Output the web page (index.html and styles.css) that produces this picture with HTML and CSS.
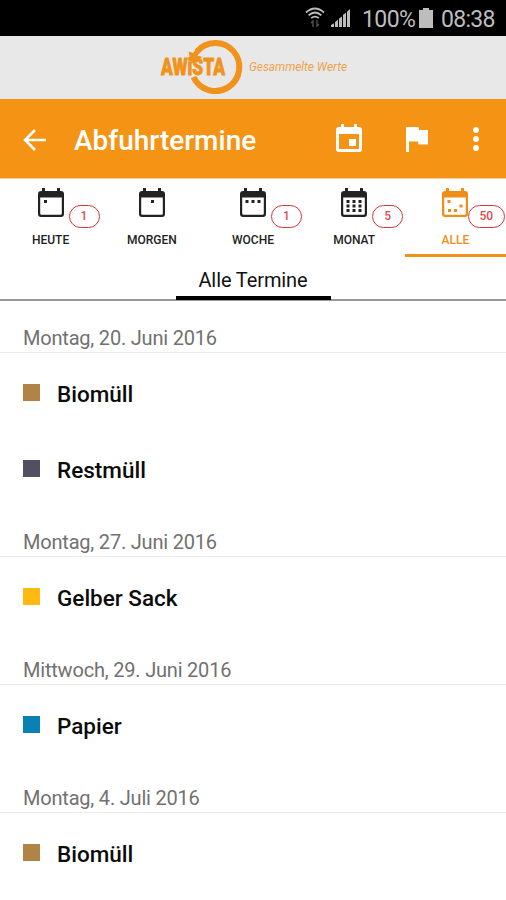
FILE: index.html
```html
<!DOCTYPE html>
<html lang="de">
<head>
<meta charset="utf-8">
<title>Abfuhrtermine</title>
<link rel="stylesheet" href="styles.css">
</head>
<body>
<div class="status">
  <svg class="wifi" width="20" height="22" viewBox="0 0 20 22" fill="none" stroke="#bdbdbd" stroke-width="1.7"><path d="M1 5.500Q10-2.500 19 5.500M3.600 8.400Q10 2.600 16.400 8.400M6.200 11.200Q10 8 13.800 11.200"/><path d="M8 20v-6l-2 2M12 13v6l2-2" stroke="#555" stroke-width="1.300"/></svg>
  <svg class="signal" width="19" height="18" viewBox="0 0 19 19" preserveAspectRatio="none" fill="#bdbdbd"><path d="M0 19v-2l3-2v4zM4 19v-5l3-3v8zM8 19v-9l3-2v11zM12 19v-13l3-2v15zM16 19v-16l3-3v19z"/></svg>
  <span class="percent">100%</span>
  <svg class="battery" width="14" height="20" viewBox="0 0 14 20" fill="#bdbdbd"><path d="M4 0h6v2h4v18H0V2h4z"/></svg>
  <span class="clock">08:38</span>
</div>
<div class="brand">
  <svg width="200" height="63" viewBox="155 36 200 63">
    <path d="M197 51.500A24 24 0 1 1 193.500 77" fill="none" stroke="#f0921c" stroke-width="6"/>
    <text class="logo halo" x="161" y="75" textLength="64" lengthAdjust="spacingAndGlyphs">AWiSTA</text>
    <path d="M188.500 51.500l3 12 11-6.500-5-1.500 3-4-4-3-3.500 4.500z" fill="#f0921c"/>
    <text class="logo" x="161" y="75" textLength="64" lengthAdjust="spacingAndGlyphs">AWiSTA</text>
    <text class="slogan" x="249" y="71" textLength="98" lengthAdjust="spacingAndGlyphs">Gesammelte Werte</text>
  </svg>
</div>
<header class="appbar">
  <svg class="back" width="24" height="24" viewBox="0 0 24 24" fill="none" stroke="#fff" stroke-width="2.600"><path d="M23 12H2M12 2L2 12l10 10"/></svg>
  <h1>Abfuhrtermine</h1>
  <svg class="event" width="26" height="28" viewBox="0 0 26 28" fill="#fff"><path fill-rule="evenodd" d="M5 0h3v3h10V0h3v3h2q3 0 3 3v19q0 3-3 3H3q-3 0-3-3V6q0-3 3-3h2zM3 10v15h20V10z"/><path d="M13 15h7v7h-7z"/></svg>
  <svg class="flag" width="22" height="25" viewBox="0 0 22 25" fill="#fff"><path d="M0 0h12.500l.6 3H22v14.500h-9.500l-.6-3H3V25H0z"/></svg>
  <svg class="more" width="6" height="24" viewBox="0 0 6 24" fill="#fff"><circle cx="3" cy="3" r="2.900"/><circle cx="3" cy="12" r="2.900"/><circle cx="3" cy="21" r="2.900"/></svg>
</header>
<svg width="0" height="0" class="defs"><symbol id="cal" viewBox="0 0 26 29"><path fill="currentColor" fill-rule="evenodd" d="M4 0h3v3h12V0h3v3h1q3 0 3 3v20q0 3-3 3H3q-3 0-3-3V6q0-3 3-3h1zM2.200 9.500v16q0 1.300 1.300 1.300h19q1.300 0 1.300-1.300v-16z"/></symbol></svg>
<nav class="tabs">
  <div class="tab"><svg class="cal" viewBox="0 0 26 29"><use href="#cal"/><path fill="currentColor" d="M6 12h3v3H6z"/></svg><span>HEUTE</span><b class="badge">1</b></div>
  <div class="tab"><svg class="cal" viewBox="0 0 26 29"><use href="#cal"/><path fill="currentColor" d="M12 12h3v3h-3z"/></svg><span>MORGEN</span></div>
  <div class="tab"><svg class="cal" viewBox="0 0 26 29"><use href="#cal"/><path fill="currentColor" d="M5.500 12h3v3h-3zM11.500 12h3v3h-3zM17.500 12h3v3h-3z"/></svg><span>WOCHE</span><b class="badge">1</b></div>
  <div class="tab"><svg class="cal" viewBox="0 0 26 29"><use href="#cal"/><path fill="currentColor" d="M5.500 12h3v3h-3zM11.500 12h3v3h-3zM17.500 12h3v3h-3zM5.500 16.500h3v3h-3zM11.500 16.500h3v3h-3zM17.500 16.500h3v3h-3zM5.500 21h3v3h-3zM11.500 21h3v3h-3zM17.500 21h3v3h-3z"/></svg><span>MONAT</span><b class="badge">5</b></div>
  <div class="tab active"><svg class="cal" viewBox="0 0 26 29"><use href="#cal"/><path fill="currentColor" d="M5.500 12h3v3h-3zM17.500 16.500h3v3h-3zM6 21h3v3H6zM12 21h3v3h-3z"/></svg><span>ALLE</span><b class="badge">50</b></div>
</nav>
<div class="pager"><span>Alle Termine</span></div>
<main>
  <h2>Montag, 20. Juni 2016</h2>
  <div class="item"><i class="bio"></i>Biomüll</div>
  <div class="item"><i class="rest"></i>Restmüll</div>
  <h2>Montag, 27. Juni 2016</h2>
  <div class="item"><i class="gelb"></i>Gelber Sack</div>
  <h2>Mittwoch, 29. Juni 2016</h2>
  <div class="item"><i class="papier"></i>Papier</div>
  <h2>Montag, 4. Juli 2016</h2>
  <div class="item"><i class="bio"></i>Biomüll</div>
</main>
</body>
</html>
```
FILE: styles.css
```css
* { box-sizing: border-box; }
body { margin: 0; width: 506px; height: 900px; overflow: hidden; background: #fff; color: #111; font-family: Roboto, sans-serif; }
svg { display: block; flex: none; }
.defs { position: absolute; }
.status { height: 36px; background: #000; color: #bdbdbd; display: flex; align-items: center; padding-left: 305px; font-size: 23px; white-space: nowrap; }
.signal { margin-left: 6px; }
.percent { margin-left: 12px; width: 52px; letter-spacing: -.6px; padding-top: 3px; }
.battery { margin-left: 5px; }
.clock { margin-left: 8px; letter-spacing: -.7px; padding-top: 3px; }
.brand { height: 63px; background: #e8e8e8; padding-left: 155px; }
.logo { font: 900 23px Roboto, sans-serif; fill: #f0921c; stroke: #f0921c; stroke-width: .8px; }
.halo { stroke: #e8e8e8; stroke-width: 3px; }
.slogan { font: italic 400 12px Roboto, sans-serif; fill: #f0a24a; }
.appbar { height: 79px; background: #f49314; color: #fff; display: flex; align-items: center; padding: 3px 0 0 23px; }
h1 { margin: 0 0 0 27px; width: 262px; font-size: 28px; font-weight: 500; line-height: 40px; white-space: nowrap; padding-top: 1px; }
.event { margin-top: -4px; }
.back { margin-top: -1px; }
.flag { margin-left: 44px; margin-top: -1px; }
.more { margin-left: 45px; margin-top: -2px; }
.tabs { height: 79px; display: grid; grid-template-columns: repeat(5, 101.2px); border-top: 1px solid #fbcf95; }
.tab { position: relative; display: flex; flex-direction: column; align-items: center; padding-top: 9px; font-size: 12px; font-weight: 500; color: #222; }
.tab span { margin-top: 15px; line-height: 16px; }
.cal { width: 26px; height: 29px; }
.tab.active { color: #ee8e18; border-bottom: 3px solid #f0921c; }
.badge { position: absolute; left: 68.500px; top: 26px; width: 31px; height: 23px; border: 1.500px solid #dd3038; border-radius: 12px; color: #dc4a52; font-size: 12px; font-weight: 500; line-height: 21px; text-align: center; }
.active .badge { left: 63px; width: 37px; }
.pager { height: 44px; border-bottom: 2px solid #999; display: flex; justify-content: center; }
.pager span { width: 155px; height: 43px; border-bottom: 4px solid #000; text-align: center; font-size: 20px; letter-spacing: -.1px; line-height: 47px; }
h2 { margin: 0; height: 52px; padding: 12px 0 0 23px; border-bottom: 1px solid #ececec; font-size: 20px; line-height: 50px; font-weight: 400; letter-spacing: -.2px; color: #717171; }
.item { height: 76px; padding: 6px 0 0 23px; display: flex; align-items: center; font-size: 22.500px; font-weight: 500; color: #0c0c0c; }
.item i { width: 17px; height: 17px; margin-right: 17px; margin-top: -4px; }
.bio { background: #b08346; }
.rest { background: #505060; }
.gelb { background: #ffb90f; }
.papier { background: #0882b4; }
```
